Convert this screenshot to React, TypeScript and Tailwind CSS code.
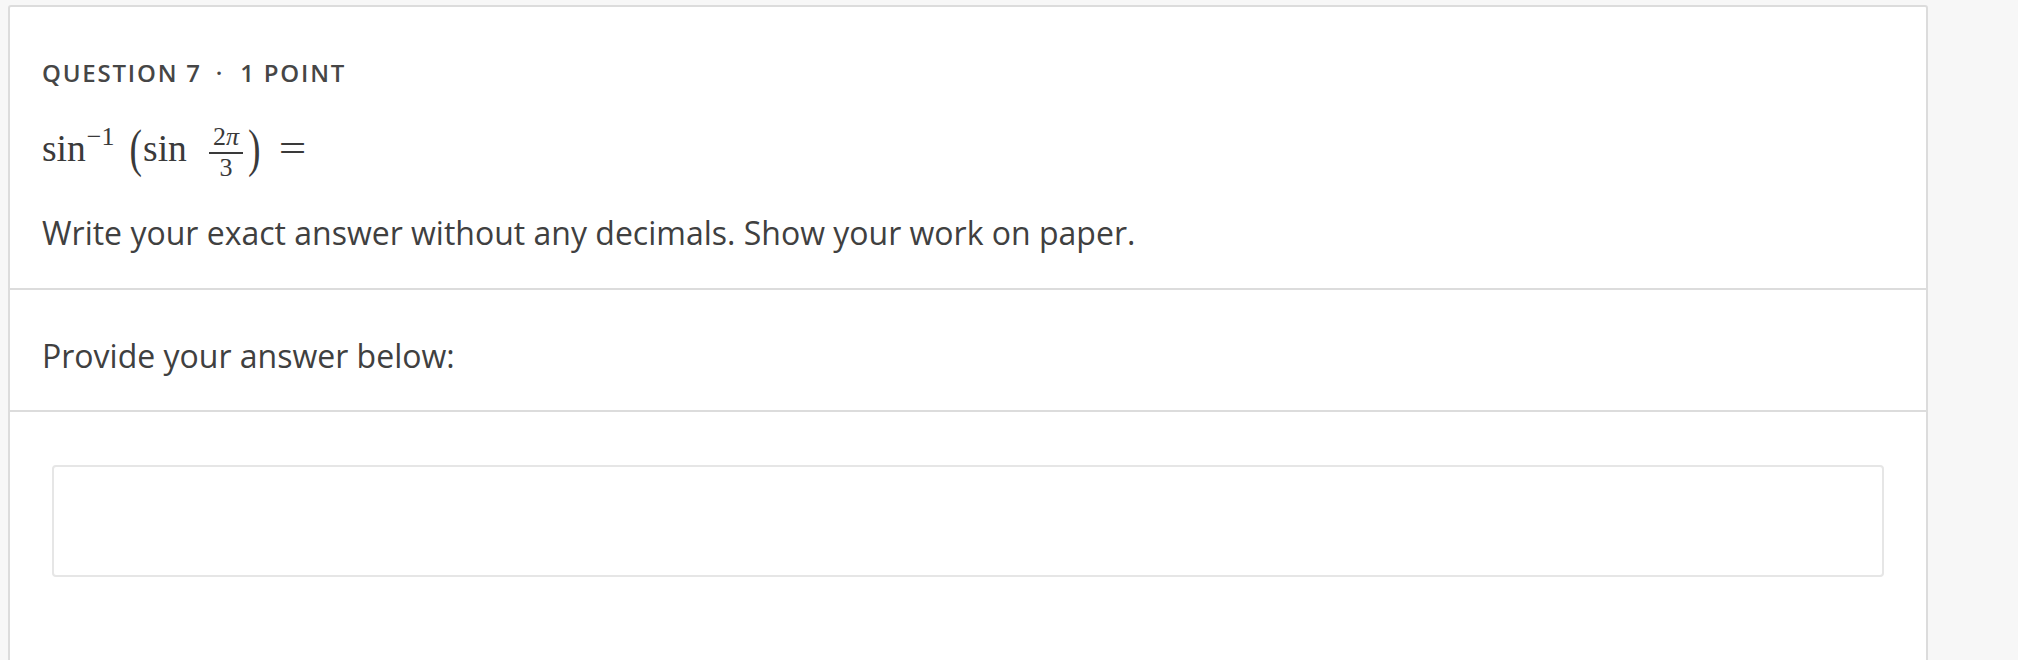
const Fraction = ({ top, bottom }: { top: React.ReactNode; bottom: React.ReactNode }) => (
  <span className="inline-flex flex-col items-center align-middle text-[26px] leading-none">
    <span className="px-[4px] pb-[2px]">{top}</span>
    <span className="h-[1.5px] w-full bg-[#3a3a3a]" />
    <span className="px-[4px] pt-[1px]">{bottom}</span>
  </span>
);

const App = () => {
  return (
    <div className="min-h-screen bg-[#f7f7f7] pt-[5px] pl-[8px] font-['Open_Sans',sans-serif] text-[#404040]">
      <div className="w-[1920px] min-h-[700px] bg-white border-2 border-[#dcdcdc] rounded-[3px]">
        {/* QUESTION */}
        <div className="px-8 pt-[48px] pb-[31px]">
          <div className="text-[24px] leading-[36px] font-semibold tracking-[0.075em] uppercase text-[#464646]">
            Question 7<span className="ml-[14px] mr-[16px]">·</span>1 Point
          </div>
          <div className="mt-[16px] font-['Liberation_Serif',serif] text-[37.6px] leading-[60px] text-[#3a3a3a] whitespace-nowrap">
            <span>sin</span>
            <span className="text-[26px] align-[16px] ml-[1px]">−1</span>
            <span className="inline-block scale-y-[1.4] ml-[15px]">(</span>
            <span className="ml-[1px]">sin</span>
            <span className="ml-[22px]">
              <Fraction top={<>2<i>π</i></>} bottom="3" />
            </span>
            <span className="inline-block scale-y-[1.4] ml-[5px]">)</span>
            <span className="inline-block scale-x-[1.3] ml-[22px]">=</span>
          </div>
          <div className="mt-[28px] text-[32px] leading-[48px]">
            Write your exact answer without any decimals. Show your work on paper.
          </div>
        </div>

        {/* ANSWER LABEL */}
        <div className="border-t-2 border-[#dcdcdc] px-8 pt-[42px] pb-[30px]">
          <div className="text-[32px] leading-[48px]">Provide your answer below:</div>
        </div>

        {/* ANSWER INPUT */}
        <div className="border-t-2 border-[#dcdcdc] px-[42px] pt-[53px] pb-16">
          <div className="h-[112px] border-2 border-[#e6e6e6] rounded-[4px] bg-white" />
        </div>
      </div>
    </div>
  );
};

export default App;
